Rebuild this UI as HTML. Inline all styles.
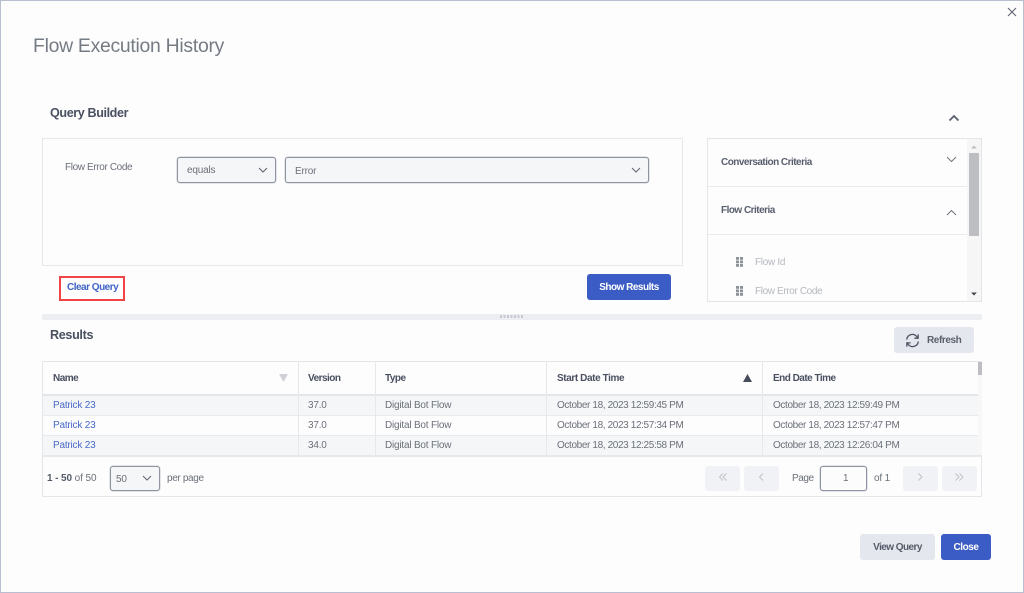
<!DOCTYPE html>
<html><head><meta charset="utf-8"><title>Flow Execution History</title>
<style>
*{box-sizing:border-box}
html,body{margin:0;padding:0;width:1024px;height:593px;overflow:hidden;background:#fdfdfe}
body{position:relative;font-family:"Liberation Sans",sans-serif;color:#6b7078;font-size:10px;filter:blur(.3px)}
.a{position:absolute}
.t{position:absolute;white-space:nowrap;line-height:14px;height:14px;letter-spacing:-.2px;margin-top:1px}
.d{letter-spacing:-.37px}
.b{font-weight:bold;color:#4a5060;letter-spacing:-.52px}
.l{color:#4668c8}
.sel{position:absolute;background:#f5f6f8;border:1px solid #8f95a0;border-radius:3px;box-shadow:0 0 0 .5px #c8ccd4}
.btn{position:absolute;border-radius:3px;text-align:center;font-weight:bold;line-height:27px;font-size:10px;letter-spacing:-.5px;white-space:nowrap}
.pri{background:#3c5cc5;color:#fff}
.sec{background:#e4e7ee;color:#555b68}
.pg{position:absolute;top:466px;width:35px;height:25px;background:#f1f2f5;border-radius:3px}
.row{position:absolute;left:43px;width:935px;height:20px}
.v{position:absolute;width:1px;background:#e6e8ec}
</style></head>
<body>
<div class="a" style="left:0;top:0;width:1024px;height:593px;border:1px solid #b9bed0"></div>

<div class="t" style="left:33px;top:33px;height:24px;line-height:24px;font-size:19.4px;color:#757b83;letter-spacing:-.28px">Flow Execution History</div>
<svg class="a" style="left:1006px;top:6px" width="12" height="12" viewBox="0 0 12 12"><path d="M2 2l8 8M10 2l-8 8" stroke="#5f6570" stroke-width="1.1" fill="none"/></svg>

<div class="t b" style="left:50px;top:105px;font-size:12.6px;letter-spacing:-.4px">Query Builder</div>
<svg class="a" style="left:948px;top:113px" width="12" height="10" viewBox="0 0 12 10"><path d="M1.500 7.500L6 3l4.500 4.500" stroke="#5a606c" stroke-width="1.800" fill="none"/></svg>

<div class="a" style="left:42px;top:138px;width:641px;height:128px;border:1px solid #e6e8ec"></div>
<div class="t d" style="left:65px;top:160px">Flow Error Code</div>
<div class="sel" style="left:177px;top:157px;width:99px;height:26px"></div>
<div class="t" style="left:187px;top:163px">equals</div>
<svg class="a" style="left:258px;top:166px" width="10" height="9" viewBox="0 0 10 9"><path d="M1 2l4 4 4-4" stroke="#5f6570" stroke-width="1.100" fill="none"/></svg>
<div class="sel" style="left:284.500px;top:157px;width:364.500px;height:26px"></div>
<div class="t" style="left:295px;top:164px">Error</div>
<svg class="a" style="left:631px;top:166px" width="10" height="9" viewBox="0 0 10 9"><path d="M1 2l4 4 4-4" stroke="#5f6570" stroke-width="1" fill="none"/></svg>

<div class="a" style="left:59px;top:276px;width:66px;height:25px;border:2px solid #f04445"></div>
<div class="t" style="left:67px;top:280px;font-weight:bold;color:#4163c8;letter-spacing:-.5px">Clear Query</div>
<div class="btn pri" style="left:587px;top:274px;width:84px;height:26px">Show Results</div>

<div class="a" style="left:707px;top:138px;width:275px;height:164px;border:1px solid #e4e6ea"></div>
<div class="a" style="left:967px;top:139px;width:14px;height:162px;background:#f6f6f7"></div>
<div class="a" style="left:969px;top:153px;width:10px;height:83px;background:#bdbec2"></div>
<svg class="a" style="left:969px;top:143px" width="10" height="155" viewBox="0 0 10 155"><path d="M2.200 5.500L5 2.500l2.800 3z" fill="#bbbdc2"/><path d="M2.200 149.500h5.600L5 152.500z" fill="#3f434a"/></svg>
<div class="a" style="left:708px;top:186px;width:259px;height:1px;background:#e8eaee"></div>
<div class="a" style="left:708px;top:234px;width:259px;height:1px;background:#e8eaee"></div>
<div class="t b" style="left:721px;top:155px;color:#585e6c">Conversation Criteria</div>
<svg class="a" style="left:946px;top:155px" width="11" height="9" viewBox="0 0 11 9"><path d="M1 2l4.500 4.500L10 2" stroke="#70757f" stroke-width="1" fill="none"/></svg>
<div class="t b" style="left:721px;top:203px;color:#585e6c">Flow Criteria</div>
<svg class="a" style="left:946px;top:208px" width="11" height="9" viewBox="0 0 11 9"><path d="M1 7l4.500-4.500L10 7" stroke="#70757f" stroke-width="1" fill="none"/></svg>
<svg class="a" style="left:736px;top:257px" width="8" height="40" viewBox="0 0 8 40"><g fill="#8d9198"><rect x="0" y="0" width="3" height="2.800"/><rect x="4" y="0" width="3" height="2.800"/><rect x="0" y="3.500" width="3" height="2.800"/><rect x="4" y="3.500" width="3" height="2.800"/><rect x="0" y="7" width="3" height="2.800"/><rect x="4" y="7" width="3" height="2.800"/><rect x="0" y="29" width="3" height="2.800"/><rect x="4" y="29" width="3" height="2.800"/><rect x="0" y="32.500" width="3" height="2.800"/><rect x="4" y="32.500" width="3" height="2.800"/><rect x="0" y="36" width="3" height="2.800"/><rect x="4" y="36" width="3" height="2.800"/></g></svg>
<div class="t" style="left:755px;top:255px;color:#b5b8be;letter-spacing:-.3px">Flow Id</div>
<div class="t d" style="left:755px;top:284px;color:#b5b8be">Flow Error Code</div>

<div class="a" style="left:42px;top:314px;width:940px;height:6px;background:#eceef2"></div>
<div class="a" style="left:500px;top:315px;width:24px;height:3px;background:repeating-linear-gradient(90deg,#c6c9cf 0 2px,#eceef2 2px 3.500px)"></div>

<div class="t b" style="left:50px;top:327px;font-size:12.600px;letter-spacing:-.34px">Results</div>
<div class="a" style="left:894px;top:327px;width:80px;height:26px;background:#e4e7ee;border-radius:3px"></div>
<svg class="a" style="left:905px;top:333px" width="15" height="15" viewBox="0 0 16 16"><g fill="none" stroke="#4c5260" stroke-width="1.400"><path d="M1.800 7A6 6 0 0 1 12.300 3.600L14 5.500"/><path d="M14.200 9A6 6 0 0 1 3.700 12.400L2 10.500"/><path d="M14 1.500v4h-4"/><path d="M2 14.500v-4h4"/></g></svg>
<div class="t" style="left:927px;top:333px;font-weight:bold;color:#5a606c;letter-spacing:-.42px">Refresh</div>

<div class="a" style="left:42px;top:361px;width:940px;height:136px;border:1.500px solid #e4e6ea"></div>
<div class="a" style="left:978px;top:362px;width:4px;height:94px;background:#f7f7f8"></div>
<div class="a" style="left:978px;top:362px;width:4px;height:13px;background:#bdbec2"></div>
<div class="row" style="top:396px;background:#f5f6f8;height:19px"></div>
<div class="row" style="top:436px;background:#f5f6f8;height:19px"></div>
<div class="a" style="left:43px;top:394px;width:935px;height:2px;background:#e4e6ea"></div>
<div class="a" style="left:43px;top:415px;width:935px;height:1px;background:#e8eaee"></div>
<div class="a" style="left:43px;top:435px;width:935px;height:1px;background:#e8eaee"></div>
<div class="a" style="left:43px;top:455px;width:939px;height:2px;background:#e6e8ec"></div>
<div class="v" style="left:298px;top:362px;height:93px"></div>
<div class="v" style="left:375px;top:362px;height:93px"></div>
<div class="v" style="left:546px;top:362px;height:93px"></div>
<div class="v" style="left:762px;top:362px;height:93px"></div>

<div class="t b" style="left:53px;top:371px">Name</div>
<svg class="a" style="left:278px;top:373px" width="11" height="10" viewBox="0 0 11 10"><path d="M1 1h9L5.500 9z" fill="#cfd1d6"/></svg>
<div class="t b" style="left:308px;top:371px">Version</div>
<div class="t b" style="left:385px;top:371px">Type</div>
<div class="t b" style="left:557px;top:371px;letter-spacing:-.4px">Start Date Time</div>
<svg class="a" style="left:742px;top:373px" width="11" height="10" viewBox="0 0 11 10"><path d="M1 9h9L5.500 1z" fill="#454b58"/></svg>
<div class="t b" style="left:773px;top:371px">End Date Time</div>

<div class="t l" style="left:53px;top:398px">Patrick 23</div>
<div class="t" style="left:308px;top:398px">37.0</div>
<div class="t" style="left:385px;top:398px">Digital Bot Flow</div>
<div class="t d" style="left:557px;top:398px">October 18, 2023 12:59:45 PM</div>
<div class="t d" style="left:773px;top:398px">October 18, 2023 12:59:49 PM</div>

<div class="t l" style="left:53px;top:418px">Patrick 23</div>
<div class="t" style="left:308px;top:418px">37.0</div>
<div class="t" style="left:385px;top:418px">Digital Bot Flow</div>
<div class="t d" style="left:557px;top:418px">October 18, 2023 12:57:34 PM</div>
<div class="t d" style="left:773px;top:418px">October 18, 2023 12:57:47 PM</div>

<div class="t l" style="left:53px;top:438px">Patrick 23</div>
<div class="t" style="left:308px;top:438px">34.0</div>
<div class="t" style="left:385px;top:438px">Digital Bot Flow</div>
<div class="t d" style="left:557px;top:438px">October 18, 2023 12:25:58 PM</div>
<div class="t d" style="left:773px;top:438px">October 18, 2023 12:26:04 PM</div>

<div class="t" style="left:47px;top:471px;letter-spacing:-.1px"><b style="color:#555b68">1 - 50</b> of 50</div>
<div class="sel" style="left:110px;top:466px;width:50px;height:25px"></div>
<div class="t" style="left:116px;top:472px">50</div>
<svg class="a" style="left:142px;top:474px" width="10" height="9" viewBox="0 0 10 9"><path d="M1 2l4 4 4-4" stroke="#5f6570" stroke-width="1" fill="none"/></svg>
<div class="t" style="left:167px;top:471px;letter-spacing:-.35px">per page</div>

<div class="pg" style="left:705px"></div>
<div class="pg" style="left:744px"></div>
<div class="pg" style="left:903px"></div>
<div class="pg" style="left:942px"></div>
<svg class="a" style="left:705px;top:466px" width="273" height="25" viewBox="0 0 273 25"><g fill="none" stroke="#bbbec5" stroke-width=".9"><path d="M18 7.500l-3.500 3.500 3.500 3.500M21.500 7.500L18 11l3.500 3.500"/><path d="M58 7.500L54.500 11l3.500 3.500"/><path d="M213.500 7.500L217 11l-3.500 3.500"/><path d="M250.500 7.500L254 11l-3.500 3.500M254.500 7.500L258 11l-3.500 3.500"/></g></svg>
<div class="t" style="left:792px;top:471px;letter-spacing:-.45px">Page</div>
<div class="sel" style="left:820px;top:466px;width:47px;height:25px;background:#fcfcfd"></div>
<div class="t" style="left:843px;top:471px">1</div>
<div class="t" style="left:874px;top:471px;letter-spacing:-.15px">of 1</div>

<div class="btn sec" style="left:860px;top:534px;width:75px;height:26px;letter-spacing:-.56px">View Query</div>
<div class="btn pri" style="left:941px;top:534px;width:50px;height:26px;letter-spacing:-.46px">Close</div>
</body></html>
